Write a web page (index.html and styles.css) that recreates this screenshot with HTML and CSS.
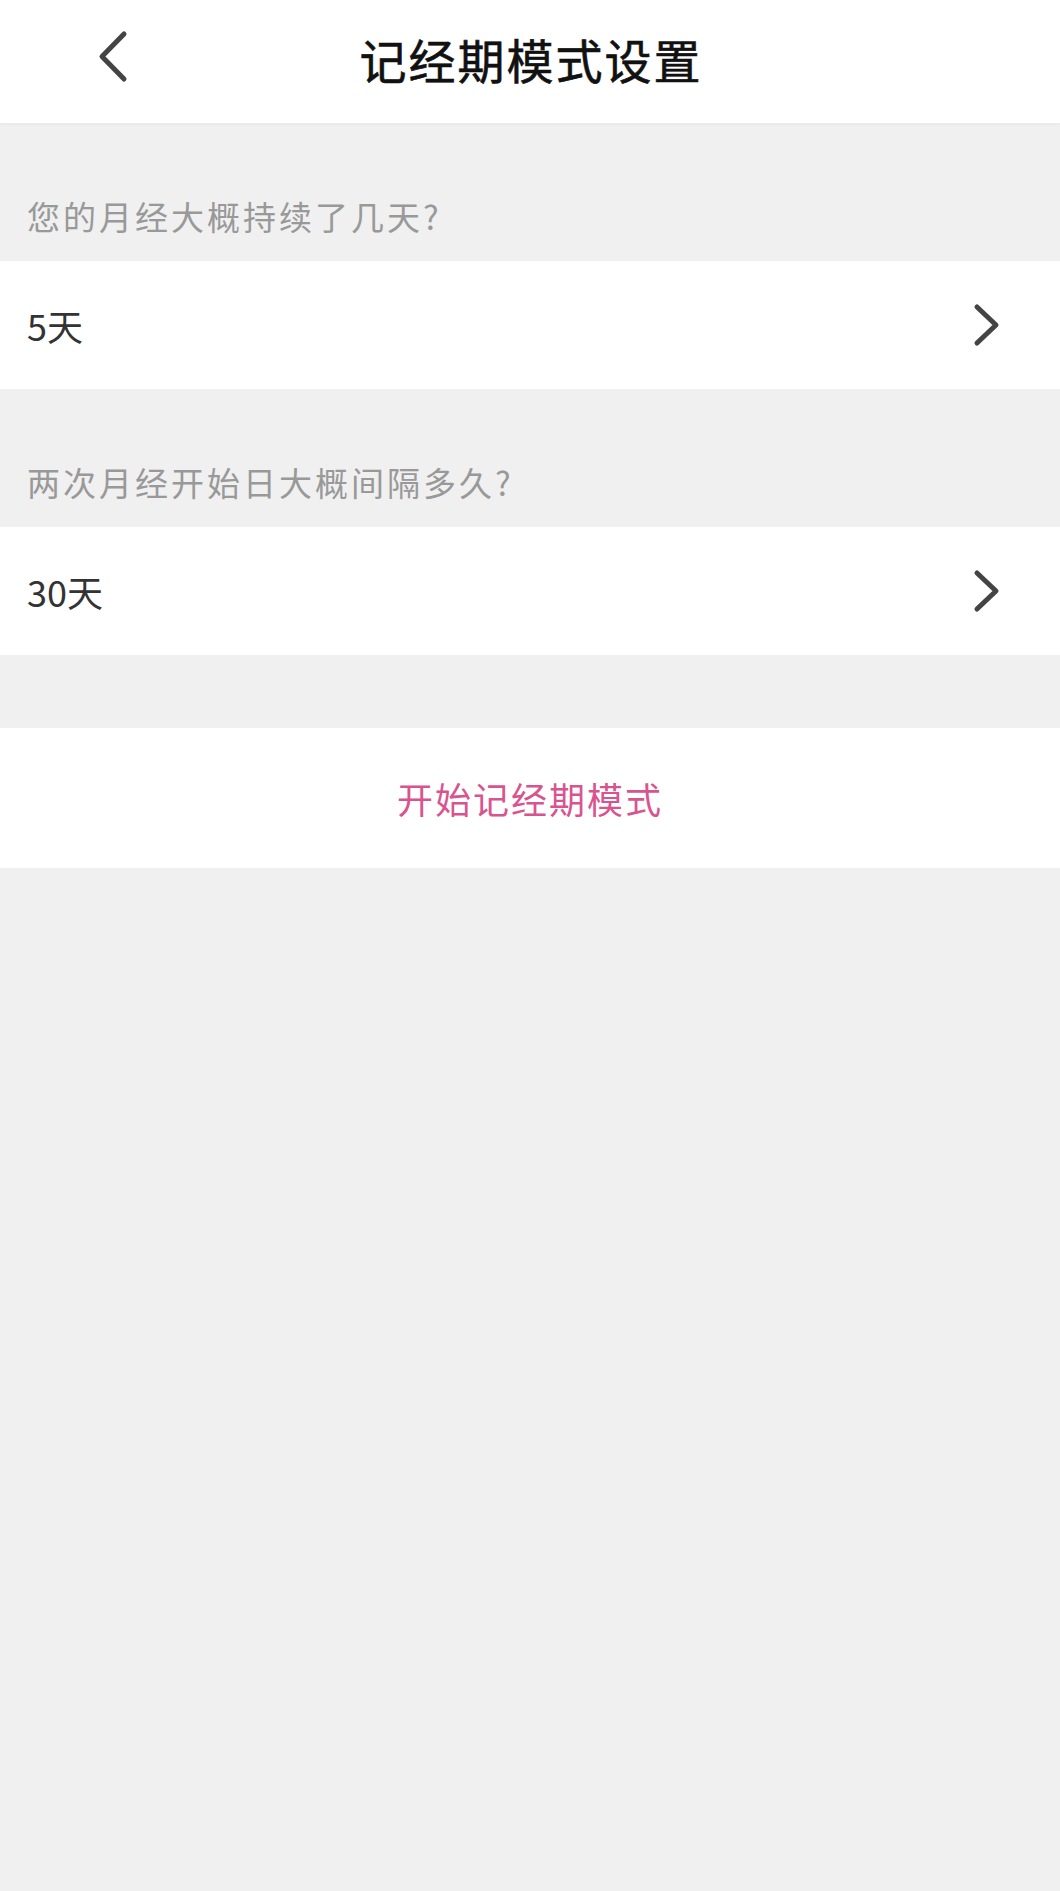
FILE: index.html
```html
<!DOCTYPE html>
<html lang="zh-CN">
<head>
<meta charset="utf-8">
<title>记经期模式设置</title>
<link rel="stylesheet" href="styles.css">
</head>
<body>
<div class="page">
  <header class="topbar">
    <button class="back" aria-label="返回">
      <svg width="31" height="53" viewBox="0 0 31 53"><path d="M27 4 L5 26.5 L27 49" fill="none" stroke="#444" stroke-width="5" stroke-linecap="round" stroke-linejoin="round"/></svg>
    </button>
    <h1 class="title">记经期模式设置</h1>
  </header>

  <div class="label">您的月经大概持续了几天?</div>
  <div class="row">
    <span class="value">5天</span>
    <svg class="arrow" width="27" height="44" viewBox="0 0 27 44"><path d="M4 4 L23 22 L4 40" fill="none" stroke="#444" stroke-width="5" stroke-linecap="round" stroke-linejoin="round"/></svg>
  </div>

  <div class="label">两次月经开始日大概间隔多久?</div>
  <div class="row">
    <span class="value">30天</span>
    <svg class="arrow" width="27" height="44" viewBox="0 0 27 44"><path d="M4 4 L23 22 L4 40" fill="none" stroke="#444" stroke-width="5" stroke-linecap="round" stroke-linejoin="round"/></svg>
  </div>

  <div class="start">开始记经期模式</div>
</div>
</body>
</html>
```

FILE: styles.css
```css
html, body {
  margin: 0;
  padding: 0;
  background: #f0f0f0;
}

body {
  font-family: "Noto Sans CJK SC", "Noto Sans", sans-serif;
  min-height: 1891px;
}

.page {
  display: flex;
  flex-direction: column;
}

.topbar {
  height: 123px;
  background: #ffffff;
  display: flex;
  align-items: center;
  justify-content: center;
  position: relative;
  box-shadow: 0 2px 3px rgba(0, 0, 0, 0.03);
}

.back {
  position: absolute;
  left: 97px;
  top: 30px;
  padding: 0;
  border: 0;
  background: none;
  display: flex;
}

.title {
  margin: 0;
  font-size: 47px;
  font-weight: 400;
  color: #111111;
  letter-spacing: 2px;
  margin-right: -2px;
  line-height: 1;
  padding-bottom: 6px;
  -webkit-text-stroke: 0.6px #111111;
}

.label {
  box-sizing: border-box;
  height: 138px;
  padding: 73px 0 0 27px;
  font-size: 33px;
  line-height: 40px;
  color: #999999;
  letter-spacing: 3px;
}

.row {
  height: 128px;
  background: #ffffff;
  display: flex;
  align-items: center;
  justify-content: space-between;
  padding: 0 60px 0 27px;
}

.value {
  font-size: 36px;
  color: #333333;
  line-height: 1;
}

.arrow {
  display: block;
}

.start {
  margin-top: 73px;
  height: 140px;
  background: #ffffff;
  display: flex;
  align-items: center;
  justify-content: center;
  font-size: 36px;
  letter-spacing: 2px;
  color: #d9548f;
}
```
